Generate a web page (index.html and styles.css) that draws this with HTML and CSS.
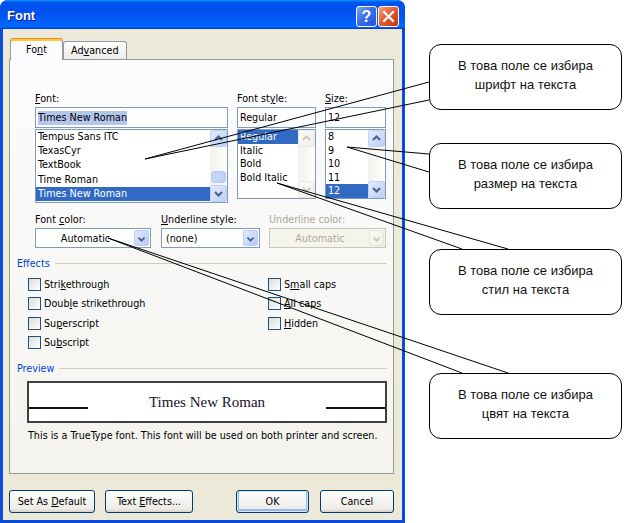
FILE: index.html
```html
<!DOCTYPE html>
<html lang="bg">
<head>
    <meta charset="UTF-8">
    <title>Font</title>
    <link rel="stylesheet" href="styles.css">
</head>
<body>

<div class="page">
  <div class="window">
    <div class="titlebar">
      <span class="title">Font</span>
      <div class="title-buttons">
        <div class="tbtn help">?</div>
        <div class="tbtn close">
          <svg width="19" height="19" viewBox="0 0 19 19"><path d="M5 5 L14 14 M14 5 L5 14" stroke="#fff" stroke-width="2.2" stroke-linecap="square"/></svg>
        </div>
      </div>
    </div>

    <div class="dialog">
      <div class="tabs">
        <div class="tab active"><span>Fo<u>n</u>t</span></div>
        <div class="tab"><span>Ad<u>v</u>anced</span></div>
      </div>

      <div class="panel">
        <div class="pickers">
          <div class="picker font-picker">
            <div class="label"><u>F</u>ont:</div>
            <div class="input"><span class="sel-text">Times New Roman</span></div>
            <div class="list">
              <div class="items">
                <div class="item">Tempus Sans ITC</div>
                <div class="item">TexasCyr</div>
                <div class="item">TextBook</div>
                <div class="item">Time Roman</div>
                <div class="item selected">Times New Roman</div>
              </div>
              <div class="scrollbar">
                <div class="sb-btn"><svg width="15" height="15" viewBox="0 0 15 15"><path d="M4 9 L7.5 5.5 L11 9" fill="none" stroke="#4D6185" stroke-width="2"/></svg></div>
                <div class="sb-track"><div class="sb-thumb"></div></div>
                <div class="sb-btn"><svg width="15" height="15" viewBox="0 0 15 15"><path d="M4 6 L7.5 9.5 L11 6" fill="none" stroke="#4D6185" stroke-width="2"/></svg></div>
              </div>
            </div>
          </div>

          <div class="picker style-picker">
            <div class="label">Font st<u>y</u>le:</div>
            <div class="input">Regular</div>
            <div class="list short">
              <div class="items">
                <div class="item selected">Regular</div>
                <div class="item">Italic</div>
                <div class="item">Bold</div>
                <div class="item">Bold Italic</div>
              </div>
              <div class="scrollbar">
                <div class="sb-btn off"><svg width="15" height="15" viewBox="0 0 15 15"><path d="M4 9 L7.5 5.5 L11 9" fill="none" stroke="#CAC8BB" stroke-width="2"/></svg></div>
                <div class="sb-track"></div>
                <div class="sb-btn off"><svg width="15" height="15" viewBox="0 0 15 15"><path d="M4 6 L7.5 9.5 L11 6" fill="none" stroke="#CAC8BB" stroke-width="2"/></svg></div>
              </div>
            </div>
          </div>

          <div class="picker size-picker">
            <div class="label"><u>S</u>ize:</div>
            <div class="input">12</div>
            <div class="list short">
              <div class="items">
                <div class="item">8</div>
                <div class="item">9</div>
                <div class="item">10</div>
                <div class="item">11</div>
                <div class="item selected">12</div>
              </div>
              <div class="scrollbar">
                <div class="sb-btn"><svg width="15" height="15" viewBox="0 0 15 15"><path d="M4 9 L7.5 5.5 L11 9" fill="none" stroke="#4D6185" stroke-width="2"/></svg></div>
                <div class="sb-track"></div>
                <div class="sb-btn"><svg width="15" height="15" viewBox="0 0 15 15"><path d="M4 6 L7.5 9.5 L11 6" fill="none" stroke="#4D6185" stroke-width="2"/></svg></div>
              </div>
            </div>
          </div>
        </div>

        <div class="combos">
          <div class="combo-field color-field">
            <div class="label">Font <u>c</u>olor:</div>
            <div class="combo">
              <span class="combo-text center">Automatic</span>
              <span class="combo-btn"><svg width="15" height="16" viewBox="0 0 15 16"><path d="M4 6.5 L7.5 10 L11 6.5" fill="none" stroke="#4D6185" stroke-width="2"/></svg></span>
            </div>
          </div>
          <div class="combo-field line-field">
            <div class="label"><u>U</u>nderline style:</div>
            <div class="combo">
              <span class="combo-text">(none)</span>
              <span class="combo-btn"><svg width="15" height="16" viewBox="0 0 15 16"><path d="M4 6.5 L7.5 10 L11 6.5" fill="none" stroke="#4D6185" stroke-width="2"/></svg></span>
            </div>
          </div>
          <div class="combo-field linecolor-field">
            <div class="label off">Underline color:</div>
            <div class="combo off">
              <span class="combo-text center">Automatic</span>
              <span class="combo-btn"><svg width="15" height="16" viewBox="0 0 15 16"><path d="M4 6.5 L7.5 10 L11 6.5" fill="none" stroke="#CAC8BB" stroke-width="2"/></svg></span>
            </div>
          </div>
        </div>

        <div class="group-title effects-title">Effects</div>
        <div class="effects">
          <div class="check"><span class="box"></span><span>Stri<u>k</u>ethrough</span></div>
          <div class="check"><span class="box"></span><span>Doub<u>l</u>e strikethrough</span></div>
          <div class="check"><span class="box"></span><span>Su<u>p</u>erscript</span></div>
          <div class="check"><span class="box"></span><span>Su<u>b</u>script</span></div>
          <div class="check"><span class="box"></span><span>S<u>m</u>all caps</span></div>
          <div class="check"><span class="box"></span><span><u>A</u>ll caps</span></div>
          <div class="check"><span class="box"></span><span><u>H</u>idden</span></div>
        </div>

        <div class="group-title preview-title">Preview</div>
        <div class="preview">
          <span class="rule"></span>
          <span class="sample">Times New Roman</span>
          <span class="rule"></span>
        </div>
        <p class="note">This is a TrueType font. This font will be used on both printer and screen.</p>
      </div>

      <div class="buttons">
        <div class="btn default-btn"><span>Set As <u>D</u>efault</span></div>
        <div class="btn effects-btn"><span>Text <u>E</u>ffects...</span></div>
        <div class="btn ok-btn"><span>OK</span></div>
        <div class="btn cancel-btn"><span>Cancel</span></div>
      </div>
    </div>
  </div>

  <div class="callouts">
    <div class="callout c1">В това поле се избира<br>шрифт на текста</div>
    <div class="callout c2">В това поле се избира<br>размер на текста</div>
    <div class="callout c3">В това поле се избира<br>стил на текста</div>
    <div class="callout c4">В това поле се избира<br>цвят на текста</div>
  </div>

  <!-- leader lines from the dialog fields to the notes -->
  <svg class="leaders" width="627" height="523" viewBox="0 0 627 523">
    <g stroke="#000" stroke-width="1" fill="none">
      <path d="M145 159 L429 82 M145 159 L429 100"/>
      <path d="M347 147 L429 154 M347 147 L429 172"/>
      <path d="M277 183 L508 249 M277 183 L462 249"/>
      <path d="M108 238 L508 373 M108 238 L462 373"/>
    </g>
  </svg>
</div>

</body>
</html>
```

FILE: styles.css
```css
body {
    margin: 0;
    background-color: #fff;
    font-family: "DejaVu Sans Condensed", "Liberation Sans", sans-serif;
    font-size: 10.7px;
    color: #000;
}

u {
    text-decoration-thickness: 1px;
    text-underline-offset: 1px;
}

.page {
    position: relative;
    display: flex;
    width: 627px;
    height: 523px;
    overflow: hidden;
}

/* window frame */
.window {
    width: 405px;
    height: 523px;
    flex-shrink: 0;
    display: flex;
    flex-direction: column;
    box-sizing: border-box;
    padding-bottom: 3px;
    background-color: #0A4ADD;
    border-radius: 8px 8px 0 0;
}

.titlebar {
    height: 29px;
    display: flex;
    align-items: center;
    justify-content: space-between;
    padding: 0 6px 0 7px;
    border-radius: 8px 8px 0 0;
    background: linear-gradient(to bottom, #0997ff, #0053ee 8%, #0050ee 40%, #06f 88%, #06f 93%, #005bff 95%, #003dd7 96%, #003dd7);
}

.title {
    font-family: "Liberation Sans", sans-serif;
    font-weight: bold;
    font-size: 13px;
    color: #fff;
    text-shadow: 1px 1px #0F1089;
    margin-top: 1px;
}

.title-buttons {
    display: flex;
    gap: 1px;
    align-self: flex-start;
    margin-top: 6px;
}

.tbtn {
    width: 21px;
    height: 21px;
    box-sizing: border-box;
    border: 1px solid #fff;
    border-radius: 3px;
    display: flex;
    align-items: center;
    justify-content: center;
    color: #fff;
}

.help {
    background: linear-gradient(135deg, #7EA6F7, #3A6DEB 45%, #2257D8);
    font-family: "Liberation Sans", sans-serif;
    font-weight: bold;
    font-size: 16px;
}

.close {
    background: linear-gradient(135deg, #F2A083, #E35D31 45%, #C2350F);
}

/* dialog body */
.dialog {
    flex: 1;
    margin: 0 3px;
    display: flex;
    flex-direction: column;
    padding: 9px 8px 0 6px;
    background-color: #ECE9D8;
}

.tabs {
    display: flex;
    align-items: flex-end;
    height: 22px;
    padding-left: 1px;
    margin-bottom: -1px;
    position: relative;
    z-index: 1;
}

.tab {
    height: 18px;
    box-sizing: border-box;
    margin-bottom: 1px;
    padding: 0 7px;
    line-height: 17px;
    border: 1px solid #919B9C;
    border-bottom: none;
    border-radius: 3px 3px 0 0;
    background: linear-gradient(to bottom, #fff, #ECEBE6);
}

.tab.active {
    height: 22px;
    margin-bottom: 0;
    width: 53px;
    padding: 0;
    text-align: center;
    line-height: 21px;
    background: #FCFCFE;
    border-top: 1px solid #E68B2C;
    box-shadow: inset 0 2px #FFC83C;
}

.panel {
    height: 415px;
    box-sizing: border-box;
    border: 1px solid #919B9C;
    padding: 32px 6px 0 7px;
    background: linear-gradient(to bottom, #FCFCFE, #F4F3EE);
}

.label {
    height: 13px;
    line-height: 13px;
    margin-bottom: 2px;
    white-space: nowrap;
}

.label.off {
    color: #ACA899;
}

/* font / style / size pickers */
.pickers {
    display: flex;
    gap: 9px;
    margin-left: 18px;
}

.picker {
    display: flex;
    flex-direction: column;
}

.font-picker { width: 193px; }
.style-picker { width: 79px; }
.size-picker { width: 61px; }

.input {
    height: 21px;
    box-sizing: border-box;
    border: 1px solid #7F9DB9;
    background-color: #fff;
    padding-left: 2px;
    display: flex;
    align-items: center;
}

.sel-text {
    background-color: #B3C6EC;
    line-height: 14px;
}

.list {
    margin-top: 1px;
    height: 74px;
    box-sizing: border-box;
    border: 1px solid #7F9DB9;
    background-color: #fff;
    display: flex;
}

.list.short {
    height: 70px;
}

.items {
    flex: 1;
}

.item {
    height: 14.2px;
    line-height: 14px;
    padding-left: 2px;
    white-space: nowrap;
}

.short .item {
    height: 13.6px;
    line-height: 13.6px;
}

.item.selected {
    background-color: #316AC5;
    color: #fff;
}

.scrollbar {
    width: 17px;
    display: flex;
    flex-direction: column;
    background: linear-gradient(to right, #F3F1EC, #FEFEFB);
}

.sb-btn {
    height: 17px;
    box-sizing: border-box;
    border: 1px solid #C0D1F8;
    border-radius: 2px;
    background: linear-gradient(135deg, #E3EBFE, #BCCFFA);
    display: flex;
    align-items: center;
    justify-content: center;
}

.sb-btn.off {
    border-color: #E9E7DF;
    background: linear-gradient(135deg, #FCFCFA, #EFEEE8);
}

.sb-track {
    flex: 1;
    display: flex;
    flex-direction: column;
    justify-content: flex-end;
    padding-bottom: 2px;
}

.sb-thumb {
    height: 10px;
    margin: 0 1px;
    border: 1px solid #B3C8F5;
    border-radius: 3px;
    background: linear-gradient(to right, #C9D8FC, #BDD0FA);
}

/* colour and underline combos */
.combos {
    display: flex;
    gap: 9px;
    margin: 10px 0 0 18px;
}

.color-field { width: 116px; margin-right: 1px; }
.line-field { width: 99px; }
.linecolor-field { width: 117px; }

.combo {
    height: 20px;
    box-sizing: border-box;
    border: 1px solid #7F9DB9;
    background-color: #fff;
    padding: 1px;
    display: flex;
    align-items: center;
}

.combo-text {
    flex: 1;
    padding-left: 3px;
    white-space: nowrap;
}

.combo-text.center {
    text-align: center;
    padding-left: 0;
}

.combo-btn {
    width: 15px;
    height: 16px;
    box-sizing: border-box;
    border: 1px solid #BBCDF7;
    border-radius: 2px;
    background: linear-gradient(135deg, #E0E9FE, #B6CAF8);
    display: flex;
}

.combo.off {
    border-color: #C9C7BA;
    background-color: #F5F4EA;
    color: #ACA899;
}

.combo.off .combo-btn {
    border-color: #E6E4DA;
    background: linear-gradient(135deg, #FAF9F5, #EEEDE6);
}

/* group headings */
.group-title {
    display: flex;
    align-items: center;
    height: 13px;
    line-height: 13px;
    color: #0046D5;
}

.group-title::after {
    content: "";
    flex: 1;
    height: 1px;
    margin-left: 5px;
    background-color: #D0D0BF;
}

.effects-title {
    margin-top: 9px;
}

.preview-title {
    margin-top: 7px;
}

.effects {
    display: grid;
    grid-template-columns: 240px auto;
    grid-template-rows: repeat(4, 19.33px);
    grid-auto-flow: column;
    margin: 8px 0 0 11px;
}

.check {
    display: flex;
    align-items: flex-start;
    line-height: 13px;
    white-space: nowrap;
}

.box {
    width: 13px;
    height: 13px;
    box-sizing: border-box;
    border: 1px solid #1C5180;
    background: linear-gradient(135deg, #DCDCD7, #fff);
    margin-right: 3px;
}

/* preview */
.preview {
    width: 360px;
    height: 42px;
    box-sizing: border-box;
    margin: 6px 0 0 10px;
    border: 2px solid #3F3F3F;
    background-color: #fff;
    display: flex;
    align-items: center;
}

.rule {
    width: 59px;
    height: 0;
    border-top: 2px solid #111;
    margin-top: 12px;
}

.sample {
    flex: 1;
    text-align: center;
    font-family: "Liberation Serif", serif;
    font-size: 15px;
    color: #1a1030;
}

.note {
    margin: 6px 0 0 11px;
    line-height: 13px;
    white-space: nowrap;
}

/* bottom buttons */
.buttons {
    display: flex;
    margin-top: 16px;
}

.btn {
    height: 23px;
    box-sizing: border-box;
    border: 1px solid #003C74;
    border-radius: 3px;
    background: linear-gradient(to bottom, #fff, #ECEBE6 86%, #D6D0C5);
    display: flex;
    align-items: center;
    justify-content: center;
    white-space: nowrap;
}

.default-btn { width: 86px; }
.effects-btn { width: 88px; margin-left: 10px; }
.ok-btn {
    width: 73px;
    margin-left: auto;
    box-shadow: inset 0 0 0 1px #CEE7FF, inset 0 -1px 0 2px #98B8EA;
}
.cancel-btn { width: 74px; margin-left: 11px; }

/* notes on the right */
.callouts {
    width: 193px;
    margin-left: 24px;
    display: flex;
    flex-direction: column;
}

.callout {
    height: 66px;
    box-sizing: border-box;
    border: 1px solid #000;
    border-radius: 12px;
    padding-bottom: 4px;
    display: flex;
    align-items: center;
    justify-content: center;
    text-align: center;
    font-family: "Liberation Sans", sans-serif;
    font-size: 13px;
    line-height: 19.5px;
    color: #111;
}

.c1 { margin-top: 44px; }
.c2 { margin-top: 33px; }
.c3 { margin-top: 40px; }
.c4 { margin-top: 58px; }

.leaders {
    position: absolute;
    top: 0;
    left: 0;
    pointer-events: none;
}
```
